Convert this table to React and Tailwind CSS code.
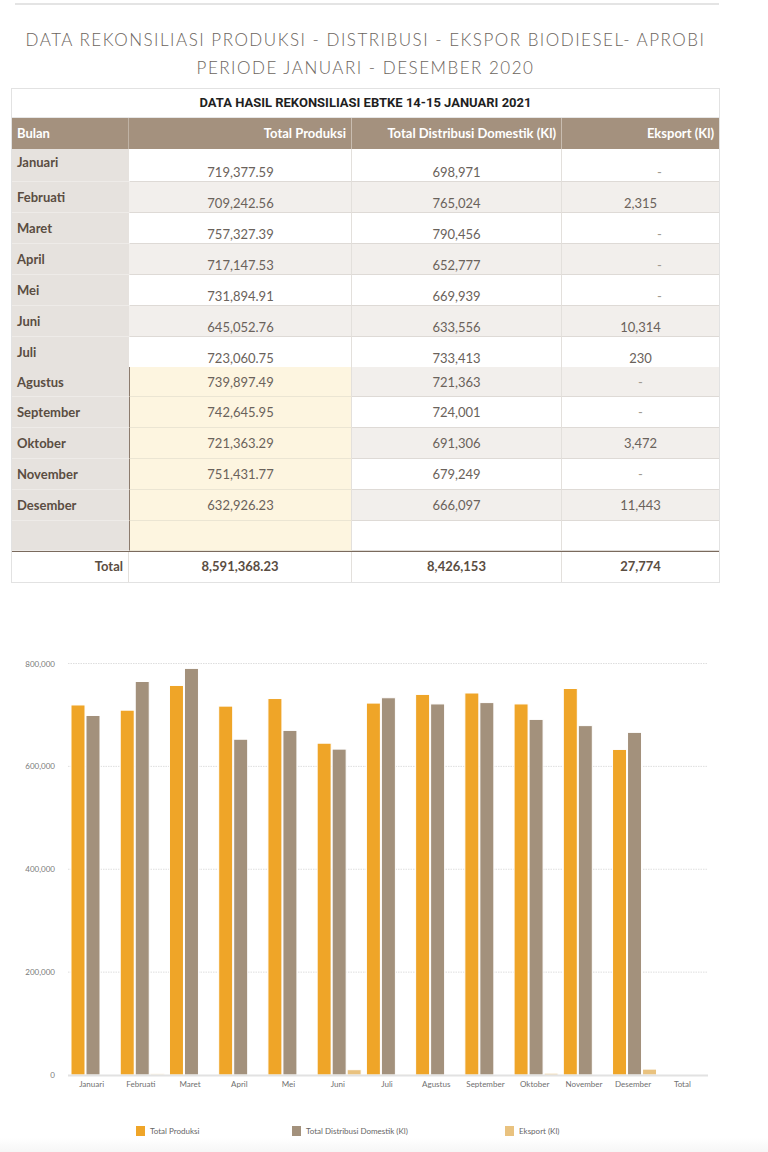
import React from "react";

const rows = [
  { m: "Januari", p: "719,377.59", d: "698,971", e: "-", eo: true, top: "first" },
  { m: "Februati", p: "709,242.56", d: "765,024", e: "2,315", top: "yes" },
  { m: "Maret", p: "757,327.39", d: "790,456", e: "-", eo: true, top: "yes" },
  { m: "April", p: "717,147.53", d: "652,777", e: "-", eo: true, top: "yes" },
  { m: "Mei", p: "731,894.91", d: "669,939", e: "-", eo: true, top: "yes" },
  { m: "Juni", p: "645,052.76", d: "633,556", e: "10,314", top: "yes" },
  { m: "Juli", p: "723,060.75", d: "733,413", e: "230", top: "yes" },
  { m: "Agustus", p: "739,897.49", d: "721,363", e: "-", y: true },
  { m: "September", p: "742,645.95", d: "724,001", e: "-", y: true },
  { m: "Oktober", p: "721,363.29", d: "691,306", e: "3,472", y: true },
  { m: "November", p: "751,431.77", d: "679,249", e: "-", y: true },
  { m: "Desember", p: "632,926.23", d: "666,097", e: "11,443", y: true },
  { m: "", p: "", d: "", e: "", y: true },
];
const heights = [33, 31, 31, 31, 31, 31, 30, 30, 31, 31, 31, 31, 30];

const prod = [719377.59, 709242.56, 757327.39, 717147.53, 731894.91, 645052.76, 723060.75, 739897.49, 742645.95, 721363.29, 751431.77, 632926.23];
const dist = [698971, 765024, 790456, 652777, 669939, 633556, 733413, 721363, 724001, 691306, 679249, 666097];
const eksp = [0, 2315, 0, 0, 0, 10314, 230, 0, 0, 3472, 0, 11443];
const cats = ["Januari", "Februati", "Maret", "April", "Mei", "Juni", "Juli", "Agustus", "September", "Oktober", "November", "Desember", "Total"];

const X0 = 68;
const X1 = 708;
const Y0 = 1074;
const K = 411.5 / 800000;
const CW = (X1 - X0) / 13;
const FF = "Lato, 'DejaVu Sans', sans-serif";

function Chart() {
  const colors = ["#efa528", "#a3917c", "#e9c27f"];
  const series = [prod, dist, eksp];
  return (
    <svg width="768" height="570" viewBox="0 582 768 570" className="block">
      {[800000, 600000, 400000, 200000].map((v) => (
        <line key={v} x1={X0} x2={X1} y1={Y0 - v * K} y2={Y0 - v * K} stroke="#dedede" strokeWidth="1" strokeDasharray="1.5 1" />
      ))}
      {[800000, 600000, 400000, 200000, 0].map((v) => (
        <text key={v} x={55} y={Y0 - v * K + 3} textAnchor="end" fontSize="8" fill="#7a7a7a" fontFamily={FF}>
          {v.toLocaleString("en-US")}
        </text>
      ))}
      {series.map((s, k) =>
        s.map((v, i) => {
          const h = v * K;
          if (h <= 0) return null;
          const x = X0 + i * CW + 3 + k * 15;
          return <rect key={k + "-" + i} x={x} y={Y0 - h} width={14} height={h} fill={colors[k]} stroke="#ffffff" strokeWidth="1" />;
        })
      )}
      <line x1={X0} x2={X1} y1={Y0 + 0.5} y2={Y0 + 0.5} stroke="#e2e2e2" strokeWidth="2" />
      {cats.map((c, i) => (
        <text key={c} x={X0 + i * CW + CW / 2 - 1} y={1086} textAnchor="middle" fontSize="8" fill="#6f6f6f" fontFamily={FF}>
          {c}
        </text>
      ))}
      <rect x={136} y={1125} width={9} height={10} fill="#efa528" />
      <text x={150} y={1133} fontSize="8" fill="#666" fontFamily={FF}>Total Produksi</text>
      <rect x={292} y={1125} width={9} height={10} fill="#a3917c" />
      <text x={306} y={1133} fontSize="8" fill="#666" fontFamily={FF}>Total Distribusi Domestik (Kl)</text>
      <rect x={505} y={1125} width={9} height={10} fill="#e9c27f" />
      <text x={519} y={1133} fontSize="8" fill="#666" fontFamily={FF}>Eksport (Kl)</text>
    </svg>
  );
}

export default function App() {
  return (
    <div className="relative w-[768px] h-[1152px] overflow-hidden bg-white font-['Lato',sans-serif]">
      <div className="pt-[3px]">
        <div className="ml-[15px] h-[2px] w-[704px] bg-[#e4e4e4]" />
      </div>
      <div className="ml-[11px] w-[709px]">
        <h1 className="mt-[21px] mb-[6px] whitespace-nowrap text-center text-[17px] font-light leading-[28px] tracking-[1.5px] text-[#6b645d]">
          DATA REKONSILIASI PRODUKSI - DISTRIBUSI - EKSPOR BIODIESEL- APROBI
          <br />
          PERIODE JANUARI - DESEMBER 2020
        </h1>

        <div className="border border-[#e2e2e2] text-[13px]">
          <div className="flex h-[29px] items-center justify-center border-b border-[#e6e6e6] font-['Liberation_Sans_Narrow','Roboto',sans-serif] text-[13px] font-bold text-[#1f1f1f]">
            DATA HASIL REKONSILIASI EBTKE 14-15 JANUARI 2021
          </div>
          <div className="grid h-[31px] grid-cols-[117px_223px_210px_157px] bg-[#a4917e] font-bold text-white">
            <div className="flex items-center border-r border-[#bfb2a4] pl-[5px]">Bulan</div>
            <div className="flex items-center justify-end border-r border-[#c9bdb1] pr-[5px]">Total Produksi</div>
            <div className="flex items-center justify-end border-r border-[#c9bdb1] pr-[5px]">Total Distribusi Domestik (Kl)</div>
            <div className="flex items-center justify-end pr-[5px]">Eksport (Kl)</div>
          </div>
          {rows.map((r, i) => {
            const even = i % 2 === 1;
            const rowBg = even ? "bg-[#f2efec]" : "bg-white";
            const isFirst = r.top === "first";
            const isTop = !!r.top;
            const mCls = isFirst ? "items-start pt-[4px]" : isTop ? "items-start pt-[6px]" : "items-center";
            const vCls = isFirst ? "items-start pt-[14px]" : isTop ? "items-start pt-[12px]" : "items-center";
            return (
              <div key={i} className="grid grid-cols-[117px_223px_210px_157px]" style={{ height: heights[i] }}>
                <div className={`flex ${mCls} border-b border-[#eeebe8] bg-[#e6e2de] pl-[5px] font-bold leading-[18px] text-[#5a4d42]`}>
                  {r.m}
                </div>
                <div
                  className={`flex ${vCls} justify-center border-r border-b leading-[18px] text-[#6a625b] ${
                    r.y ? "border-l border-l-[#8c7b6d] border-r-[#e3e0dc] border-b-[#ebe5d3] bg-[#fdf5e0]" : `border-l border-l-transparent border-r-[#e3e0dc] border-b-[#dedad6] ${rowBg}`
                  }`}
                >
                  {r.p}
                </div>
                <div className={`flex ${vCls} justify-center border-r border-b border-r-[#e3e0dc] border-b-[#dedad6] leading-[18px] text-[#6a625b] ${rowBg}`}>
                  {r.d}
                </div>
                <div className={`flex ${vCls} justify-center border-b border-[#dedad6] leading-[18px] text-[#8a827b] ${rowBg} ${r.eo ? "pl-[38px]" : ""}`}>
                  <span className={r.e === "-" ? "text-[#a09890]" : "text-[#6a625b]"}>{r.e}</span>
                </div>
              </div>
            );
          })}
          <div className="grid h-[31px] grid-cols-[117px_223px_210px_157px] border-t border-[#7a6a5d] bg-white font-bold text-[#5a4d42]">
            <div className="flex items-center justify-end border-r border-[#e3e0dc] pr-[5px]">Total</div>
            <div className="flex items-center justify-center border-r border-[#e3e0dc]">8,591,368.23</div>
            <div className="flex items-center justify-center border-r border-[#e3e0dc]">8,426,153</div>
            <div className="flex items-center justify-center">27,774</div>
          </div>
        </div>
      </div>
      <Chart />
      <div className="absolute bottom-0 left-0 h-[14px] w-full bg-gradient-to-b from-white to-[#f6f6f6]" />
    </div>
  );
}
